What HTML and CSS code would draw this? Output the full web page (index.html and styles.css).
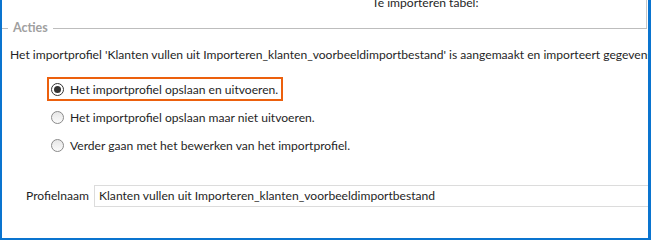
FILE: index.html
```html
<!DOCTYPE html>
<html>
<head>
<meta charset="utf-8">
<link rel="stylesheet" href="styles.css">
</head>
<body>
<div class="window">
  <div class="top">
    <span class="top-label">Te importeren tabel:</span>
  </div>
  <div class="legend">
    <span class="legend-dash"></span>
    <span class="legend-text">Acties</span>
    <span class="legend-line"></span>
  </div>
  <p class="intro">Het importprofiel 'Klanten vullen uit Importeren_klanten_voorbeeldimportbestand' is aangemaakt en importeert gegevens in de tabel.</p>
  <div class="options">
    <label class="option selected"><span class="radio checked"></span><span>Het importprofiel opslaan en uitvoeren.</span></label>
    <label class="option"><span class="radio"></span><span>Het importprofiel opslaan maar niet uitvoeren.</span></label>
    <label class="option"><span class="radio"></span><span>Verder gaan met het bewerken van het importprofiel.</span></label>
  </div>
  <div class="profile">
    <span class="profile-label">Profielnaam</span>
    <div class="profile-input">Klanten vullen uit Importeren_klanten_voorbeeldimportbestand</div>
  </div>
</div>
</body>
</html>
```
FILE: styles.css
```css
html, body {
  margin: 0;
  padding: 0;
  background: #ffffff;
}
.window {
  box-sizing: border-box;
  width: 651px;
  height: 240px;
  border-left: 2px solid #0a74cf;
  border-right: 3px solid #0a74cf;
  border-bottom: 2px solid #0a74cf;
  overflow: hidden;
  font-family: "Lato", "Noto Sans", sans-serif;
  font-size: 12.1px;
  color: #1f1f26;
}
.top {
  box-sizing: border-box;
  height: 28px;
  width: 645px;
  border-right: 1px solid #c8c8c8;
  overflow: hidden;
}
.top-label {
  display: block;
  margin-top: -5px;
  padding-left: 370px;
  line-height: 16px;
  white-space: nowrap;
}
.legend {
  display: flex;
  align-items: center;
  height: 14px;
  margin-top: -7px;
  width: 645px;
}
.legend-dash {
  width: 6px;
  height: 1px;
  background: #bdbdbd;
}
.legend-text {
  margin: 0 5px 0 5px;
  color: #a0a0a0;
  font-weight: 700;
  font-size: 12.5px;
  line-height: 14px;
}
.legend-line {
  flex: 1;
  height: 1px;
  background: #bdbdbd;
}
.intro {
  margin: 12px 0 0 0;
  padding-left: 8px;
  line-height: 16px;
  white-space: nowrap;
}
.options {
  display: flex;
  flex-direction: column;
  align-items: flex-start;
  margin-top: 14px;
  padding-left: 45px;
  gap: 4px;
}
.option {
  box-sizing: border-box;
  display: flex;
  align-items: center;
  gap: 6px;
  height: 24px;
  padding: 0 3px 0 2px;
  border: 2px solid transparent;
  white-space: nowrap;
}
.option.selected {
  border-color: #ec600d;
}
.radio {
  box-sizing: border-box;
  width: 13px;
  height: 13px;
  border-radius: 50%;
  border: 1px solid #8a8a8a;
  background: linear-gradient(#e6e6e6, #fbfbfb);
  display: flex;
  align-items: center;
  justify-content: center;
}
.radio.checked {
  border-color: #333333;
  background: #ffffff;
}
.radio.checked::after {
  content: "";
  width: 7px;
  height: 7px;
  border-radius: 50%;
  background: #333333;
}
.profile {
  display: flex;
  align-items: center;
  margin-top: 28px;
  padding-left: 24px;
}
.profile-label {
  flex: none;
  width: 68px;
  line-height: 16px;
}
.profile-input {
  box-sizing: border-box;
  flex: none;
  width: 600px;
  height: 22px;
  border: 1px solid #dcdcdc;
  padding-left: 4px;
  line-height: 20px;
  white-space: nowrap;
}
```
